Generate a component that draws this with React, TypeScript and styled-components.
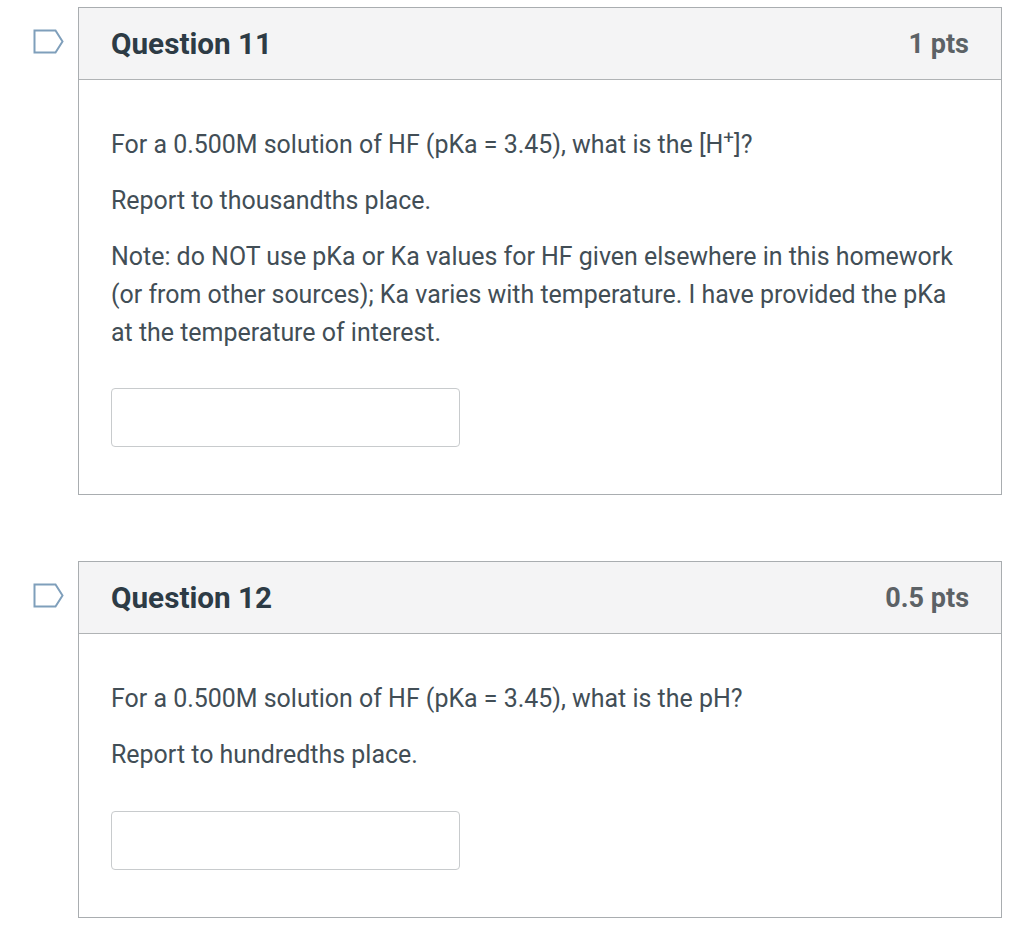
import React from "react";
import styled, { createGlobalStyle } from "styled-components";

interface IQuestion {
      title: string;
      points: string;
      answerGap: number;
      paragraphs: React.ReactNode[];
}

const GlobalStyle = createGlobalStyle`
      body {
            margin: 0;
            background: #fff;
            font-family: Roboto, "Liberation Sans", sans-serif;
      }
`;

const Page = styled.div`
      display: flex;
      flex-direction: column;
      gap: 66px;
      padding: 7px 22px 0 78px;
`;

const Card = styled.section`
      position: relative;
      border: 1px solid #a9adb0;
      background: #fff;
`;

const Flag = styled.svg`
      position: absolute;
      left: -46px;
      top: 21px;
      width: 32px;
      height: 26px;
`;

const Header = styled.header`
      display: flex;
      align-items: center;
      justify-content: space-between;
      height: 71px;
      padding: 0 32px;
      background: #f4f4f5;
      border-bottom: 1px solid #b0b3b5;
`;

const Title = styled.h2`
      margin: 0;
      font-size: 29.7px;
      font-weight: 700;
      color: #2d3b45;
`;

const Points = styled.span`
      font-size: 27px;
      font-weight: 700;
      color: #5c6266;
`;

const Body = styled.div`
      display: flex;
      flex-direction: column;
      align-items: flex-start;
      gap: 18px;
      padding: 46px 32px 47px;
`;

const Paragraph = styled.p`
      margin: 0;
      font-size: 24.95px;
      line-height: 38px;
      color: #424e56;
`;

const Sup = styled.sup`
      font-size: 19px;
      line-height: 0;
`;

const AnswerInput = styled.input<{ $gap: number }>`
      box-sizing: border-box;
      width: 349px;
      height: 59px;
      margin-top: ${({ $gap }) => $gap}px;
      border: 1px solid #c8cbcd;
      border-radius: 4px;
      background: #fff;
`;

const questions: IQuestion[] = [
      {
            title: "Question 11",
            points: "1 pts",
            answerGap: 18,
            paragraphs: [
                  <>
                        For a 0.500M solution of HF (pKa = 3.45), what is the [H
                        <Sup>+</Sup>]?
                  </>,
                  "Report to thousandths place.",
                  <>
                        Note: do NOT use pKa or Ka values for HF given elsewhere in this homework
                        <br />
                        (or from other sources); Ka varies with temperature. I have provided the pKa
                        <br />
                        at the temperature of interest.
                  </>,
            ],
      },
      {
            title: "Question 12",
            points: "0.5 pts",
            answerGap: 19,
            paragraphs: [
                  "For a 0.500M solution of HF (pKa = 3.45), what is the pH?",
                  "Report to hundredths place.",
            ],
      },
];

const App: React.FC = () => {
      return (
            <Page>
                  <GlobalStyle />
                  {questions.map((question) => (
                        <Card key={question.title}>
                              <Flag viewBox="0 0 32 26" fill="none">
                                    <path
                                          d="M1.5 1.5H22.5L29.5 12.5L22.5 23.5H1.5Z"
                                          stroke="#7f9fbb"
                                          strokeWidth="2"
                                    />
                              </Flag>
                              <Header>
                                    <Title>{question.title}</Title>
                                    <Points>{question.points}</Points>
                              </Header>
                              <Body>
                                    {question.paragraphs.map((paragraph, index) => (
                                          <Paragraph key={index}>{paragraph}</Paragraph>
                                    ))}
                                    <AnswerInput type="text" $gap={question.answerGap} />
                              </Body>
                        </Card>
                  ))}
            </Page>
      );
};

export default App;
